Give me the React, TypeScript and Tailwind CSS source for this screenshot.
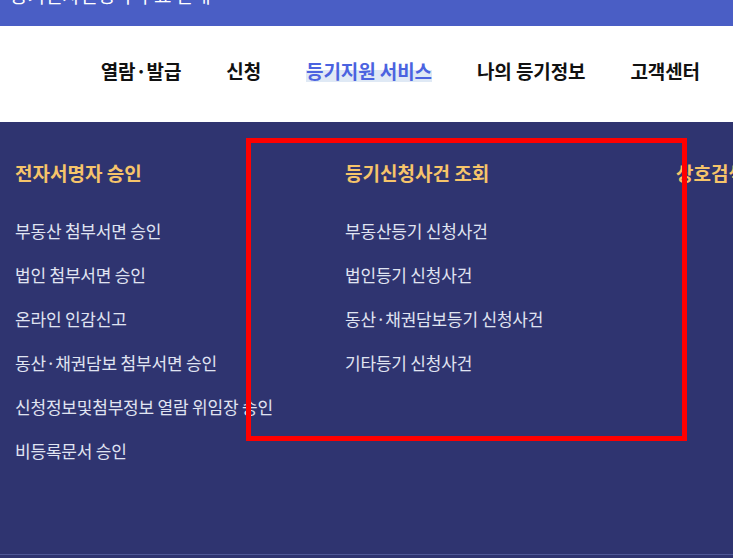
import React from "react";

const col1 = [
  "부동산 첨부서면 승인",
  "법인 첨부서면 승인",
  "온라인 인감신고",
  "동산·채권담보 첨부서면 승인",
  "신청정보및첨부정보 열람 위임장 승인",
  "비등록문서 승인",
];
const col2 = [
  "부동산등기 신청사건",
  "법인등기 신청사건",
  "동산·채권담보등기 신청사건",
  "기타등기 신청사건",
];

export default function App() {
  return (
    <div
      className="relative w-[733px] h-[558px] overflow-hidden bg-[#2f3470]"
      style={{ fontFamily: '"Noto Sans CJK KR", "Noto Sans", sans-serif' }}
    >
      <div className="h-[26px] bg-[#4a5ec5] overflow-hidden">
        <div className="pl-[10px] -mt-[17px] text-[19px] leading-[24px] text-white">
          등기전자신청 수수료 안내
        </div>
      </div>
      <nav className="h-[96px] bg-white flex items-center justify-end pr-[33px] pb-[6px] gap-[45px] text-[19px] font-bold tracking-[-0.1px] text-[#111]">
        <span>열람·발급</span>
        <span>신청</span>
        <span className="text-[#4b63e0] bg-[linear-gradient(to_bottom,transparent_48%,#dfe9f5_48%,#dfe9f5_90%,transparent_90%)]">
          등기지원 서비스
        </span>
        <span>나의 등기정보</span>
        <span>고객센터</span>
      </nav>
      <div className="flex pl-[15px] pt-[37px] whitespace-nowrap">
        <div className="w-[330px] shrink-0">
          <div className="text-[19px] font-bold text-[#f6c46a] tracking-[0px] leading-[28px]">
            전자서명자 승인
          </div>
          <ul className="mt-[31px] flex flex-col gap-[18px] text-[17px] leading-[26px] text-[#e0e4f2] tracking-[-0.2px]">
            {col1.map((t) => (
              <li key={t}>{t}</li>
            ))}
          </ul>
        </div>
        <div className="w-[331px] shrink-0">
          <div className="text-[19px] font-bold text-[#f6c46a] tracking-[0px] leading-[28px]">
            등기신청사건 조회
          </div>
          <ul className="mt-[31px] flex flex-col gap-[18px] text-[17px] leading-[26px] text-[#e0e4f2] tracking-[-0.2px]">
            {col2.map((t) => (
              <li key={t}>{t}</li>
            ))}
          </ul>
        </div>
        <div className="shrink-0">
          <div className="text-[19px] font-bold text-[#f6c46a] tracking-[0px] leading-[28px]">
            상호검색
          </div>
        </div>
      </div>
      <div className="absolute left-0 right-0 top-[554px] h-px bg-[#4f5796]" />
      <div className="absolute left-[246px] top-[138px] w-[441px] h-[303px] border-[5px] border-[#ff0000]" />
    </div>
  );
}
